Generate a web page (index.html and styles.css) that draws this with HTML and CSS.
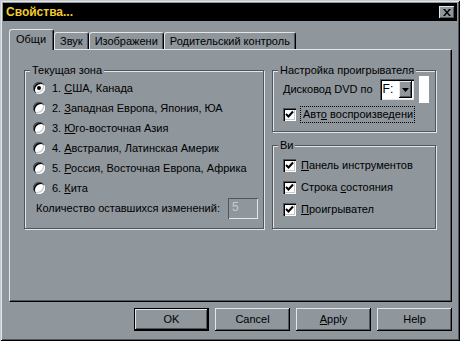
FILE: index.html
```html
<!DOCTYPE html>
<html lang="ru">
<head>
  <meta charset="UTF-8">
  <title>Свойства...</title>
  <link rel="stylesheet" href="styles.css">
</head>
<body>
  <div class="window">
    <div class="titlebar">
      <span class="title">Свойства...</span>
      <span class="close">
        <svg width="8" height="7" viewBox="0 0 8 7"><path d="M0 0h2l2 2.4L6 0h2L5 3.5 8 7H6L4 4.6 2 7H0l3-3.5z" fill="#000"/></svg>
      </span>
    </div>

    <div class="tabs">
      <div class="tab active">Общи</div>
      <div class="tab">Звук</div>
      <div class="tab">Изображени</div>
      <div class="tab">Родительский контроль</div>
    </div>

    <div class="panel">
      <div class="group zone">
        <span class="legend">Текущая зона</span>
        <div class="option"><span class="radio checked"></span><span>1. <u>С</u>ША, Канада</span></div>
        <div class="option"><span class="radio"></span><span>2. <u>З</u>ападная Европа, Япония, ЮА</span></div>
        <div class="option"><span class="radio"></span><span>3. <u>Ю</u>го-восточная Азия</span></div>
        <div class="option"><span class="radio"></span><span>4. <u>А</u>встралия, Латинская Америк</span></div>
        <div class="option"><span class="radio"></span><span>5. <u>Р</u>оссия, Восточная Европа, Африка</span></div>
        <div class="option"><span class="radio"></span><span>6. <u>К</u>ита</span></div>
        <div class="count">
          <span>Количество оставшихся изменений:</span>
          <span class="count-box">5</span>
        </div>
      </div>

      <div class="side">
        <div class="group player">
          <span class="legend">Настройка проигрывателя</span>
          <div class="drive-row">
            <span>Дисковод DVD по</span>
            <span class="combo">
              <span class="combo-value">F:</span>
              <span class="combo-btn">
                <svg width="7" height="4" viewBox="0 0 7 4"><path d="M0 0h7L3.5 4z" fill="#000"/></svg>
              </span>
            </span>
            <span class="combo-edge"></span>
          </div>
          <div class="check-row">
            <span class="check"><svg width="9" height="9" viewBox="0 0 9 9"><path d="M1 4l2.5 2.5L8 1.5" fill="none" stroke="#000" stroke-width="2"/></svg></span>
            <span class="focus">Авт<u>о</u> воспроизведени</span>
          </div>
        </div>

        <div class="group view">
          <span class="legend">Ви</span>
          <div class="check-row">
            <span class="check"><svg width="9" height="9" viewBox="0 0 9 9"><path d="M1 4l2.5 2.5L8 1.5" fill="none" stroke="#000" stroke-width="2"/></svg></span>
            <span><u>П</u>анель инструментов</span>
          </div>
          <div class="check-row">
            <span class="check"><svg width="9" height="9" viewBox="0 0 9 9"><path d="M1 4l2.5 2.5L8 1.5" fill="none" stroke="#000" stroke-width="2"/></svg></span>
            <span>Строка <u>с</u>остояния</span>
          </div>
          <div class="check-row">
            <span class="check"><svg width="9" height="9" viewBox="0 0 9 9"><path d="M1 4l2.5 2.5L8 1.5" fill="none" stroke="#000" stroke-width="2"/></svg></span>
            <span><u>П</u>роигрывател</span>
          </div>
        </div>
      </div>
    </div>

    <div class="buttons">
      <button class="btn default">OK</button>
      <button class="btn">Cancel</button>
      <button class="btn"><u>A</u>pply</button>
      <button class="btn">Help</button>
    </div>
  </div>
</body>
</html>
```

FILE: styles.css
```css
/* Reset */
* {
  margin: 0;
  padding: 0;
  box-sizing: border-box;
}

body {
  font-family: 'Liberation Sans', Arial, sans-serif;
  font-size: 11px;
  line-height: 13px;
  color: #000;
  background: #8f969c;
}

u {
  text-decoration: underline;
  text-underline-offset: 1px;
}

/* Window frame */
.window {
  width: 460px;
  height: 341px;
  padding: 3px;
  background: #8f969c;
  box-shadow: inset 1px 1px #c6cacd, inset -1px -1px #000,
              inset 2px 2px #e4e7ea, inset -2px -2px #50565b;
}

.titlebar {
  display: flex;
  align-items: center;
  justify-content: space-between;
  height: 18px;
  padding: 0 2px 0 3px;
  background: #000;
}

.title {
  color: #f2cc2e;
  font-size: 12px;
  font-weight: bold;
}

.close {
  display: flex;
  align-items: center;
  justify-content: center;
  width: 16px;
  height: 13px;
  background: #8f969c;
  box-shadow: inset -1px -1px #000, inset 1px 1px #e4e7ea, inset -2px -2px #50565b;
}

/* Tabs */
.tabs {
  display: flex;
  align-items: flex-end;
  height: 20px;
  margin: 8px 0 0 6px;
}

.tab {
  height: 17px;
  padding: 0 5px;
  line-height: 16px;
  border: 1px solid #e4e7ea;
  border-right-color: #000;
  border-bottom: none;
  border-radius: 3px 3px 0 0;
  box-shadow: inset -1px 0 #50565b;
}

.tab.active {
  position: relative;
  z-index: 1;
  height: 21px;
  margin-bottom: -1px;
  padding: 0 7px 0 6px;
  line-height: 19px;
  background: #8f969c;
}

/* Tab page */
.panel {
  display: flex;
  align-items: flex-start;
  gap: 8px;
  width: 443px;
  height: 253px;
  margin-left: 6px;
  padding: 20px 0 0 14px;
  border: 1px solid;
  border-color: #e4e7ea #000 #000 #e4e7ea;
  box-shadow: inset -1px -1px #50565b;
}

.group {
  position: relative;
  border: 1px solid #50565b;
  box-shadow: 1px 1px #e4e7ea, inset 1px 1px #e4e7ea;
}

.legend {
  position: absolute;
  top: -7px;
  left: 5px;
  padding: 0 2px;
  background: #8f969c;
}

.zone {
  width: 240px;
  padding: 7px 5px 9px 8px;
}

.option {
  display: flex;
  align-items: center;
  gap: 7px;
  height: 20px;
}

.radio {
  position: relative;
  width: 12px;
  height: 12px;
  border-radius: 50%;
  background: #fff;
  box-shadow: inset 1px 1px #50565b, inset 2px 2px #000, inset -1px -1px #fff, inset -2px -2px #c6cacd;
}

.radio.checked::after {
  content: '';
  position: absolute;
  top: 4px;
  left: 4px;
  width: 4px;
  height: 4px;
  border-radius: 50%;
  background: #000;
}

.count {
  display: flex;
  align-items: center;
  height: 21px;
  padding-left: 3px;
}

.count-box {
  width: 30px;
  height: 21px;
  margin-left: auto;
  padding: 3px 0 0 4px;
  font-size: 12px;
  color: #c6cacd;
  box-shadow: inset 1px 1px #50565b, inset -1px -1px #e4e7ea;
}

.side {
  display: flex;
  flex-direction: column;
  gap: 13px;
  width: 164px;
}

.player {
  padding: 8px 0 8px 10px;
}

.view {
  display: flex;
  flex-direction: column;
  gap: 6px;
  padding: 11px 0 11px 10px;
}

.drive-row {
  display: flex;
  align-items: center;
  height: 21px;
}

.combo {
  display: flex;
  width: 34px;
  height: 21px;
  margin-left: 7px;
  padding: 2px;
  background: #fff;
  box-shadow: inset 1px 1px #50565b, inset 2px 2px #000, inset -1px -1px #e4e7ea;
}

.combo-value {
  flex: 1;
  padding-left: 1px;
  font-size: 12px;
  line-height: 17px;
}

.combo-btn {
  display: flex;
  align-items: center;
  justify-content: center;
  width: 13px;
  height: 17px;
  background: #8f969c;
  box-shadow: inset -1px -1px #000, inset 1px 1px #e4e7ea, inset -2px -2px #50565b;
}

.combo-edge {
  width: 10px;
  height: 27px;
  margin-left: 5px;
  background: #fff;
}

.check-row {
  display: flex;
  align-items: center;
  gap: 5px;
  height: 16px;
}

.player .check-row {
  height: 17px;
  margin-top: 6px;
  gap: 4px;
}

.check {
  display: flex;
  align-items: center;
  justify-content: center;
  width: 13px;
  height: 13px;
  background: #fff;
  box-shadow: inset 1px 1px #50565b, inset 2px 2px #000, inset -1px -1px #fff, inset -2px -2px #c6cacd;
}

.focus {
  padding: 1px 1px 1px 2px;
  border: 1px dotted #000;
}

/* Dialog buttons */
.buttons {
  display: flex;
  justify-content: flex-end;
  gap: 6px;
  margin-top: 6px;
  padding-right: 5px;
}

.btn {
  display: flex;
  align-items: center;
  justify-content: center;
  width: 75px;
  height: 23px;
  border: none;
  font: inherit;
  color: #000;
  background: #8f969c;
  box-shadow: inset -1px -1px #000, inset 1px 1px #e4e7ea, inset -2px -2px #50565b;
}

.btn.default {
  border: 1px solid #000;
}
```
